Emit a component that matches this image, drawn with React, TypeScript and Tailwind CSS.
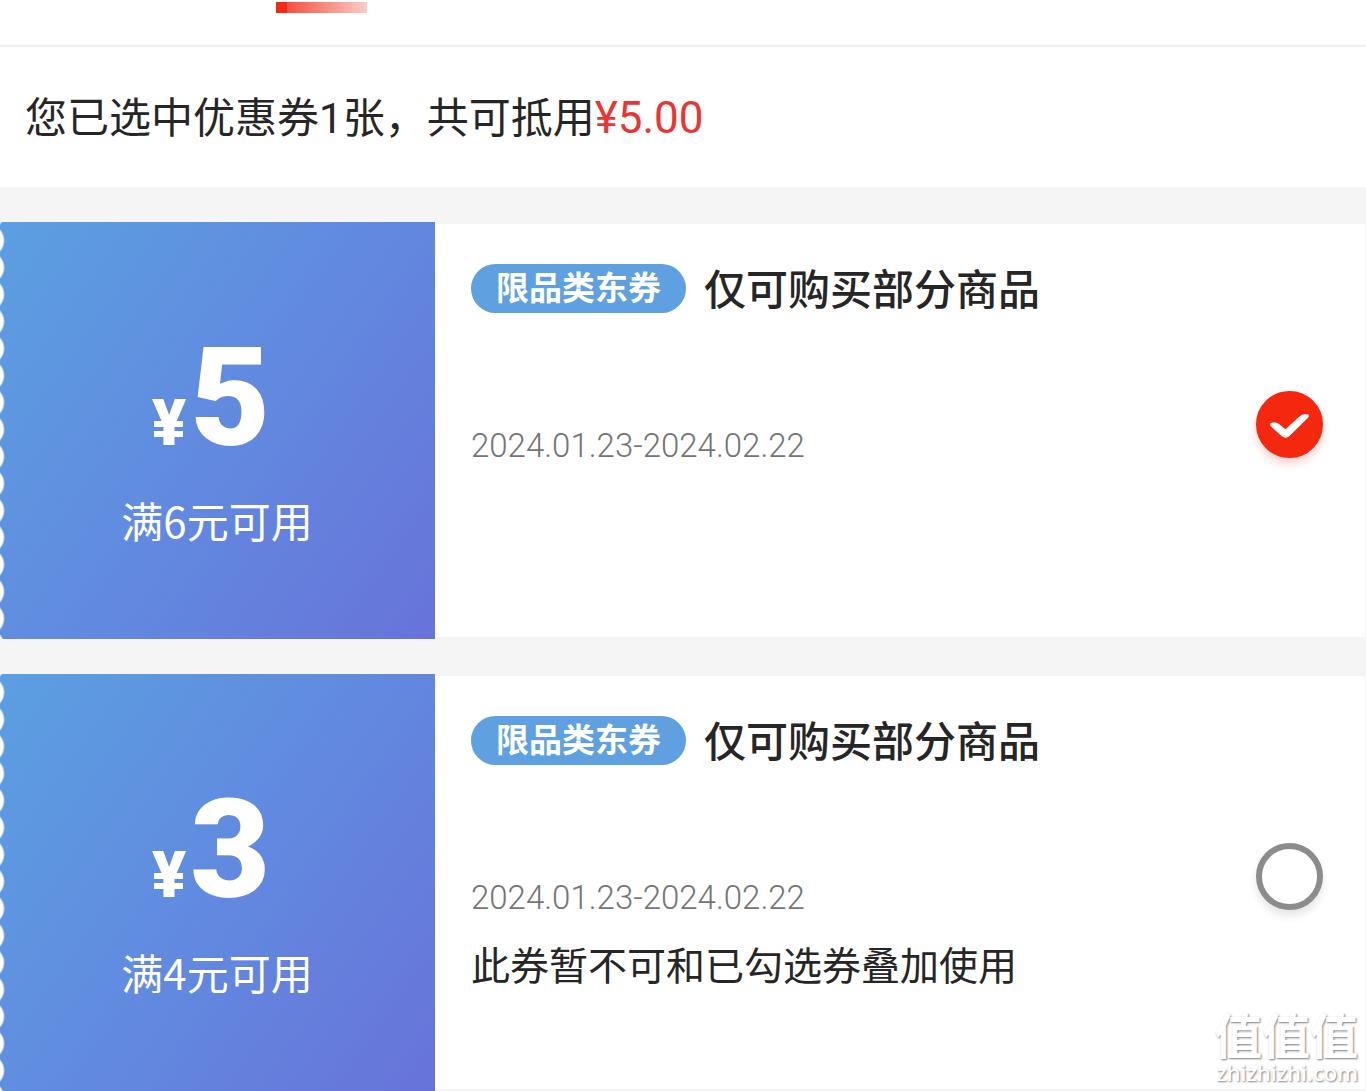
import { useState } from "react";

type Coupon = {
  id: string;
  amount: number;
  condition: string;
  tag: string;
  title: string;
  period: string;
  note?: string;
};

const coupons: Coupon[] = [
  {
    id: "coupon-5",
    amount: 5,
    condition: "满6元可用",
    tag: "限品类东券",
    title: "仅可购买部分商品",
    period: "2024.01.23-2024.02.22",
  },
  {
    id: "coupon-3",
    amount: 3,
    condition: "满4元可用",
    tag: "限品类东券",
    title: "仅可购买部分商品",
    period: "2024.01.23-2024.02.22",
    note: "此券暂不可和已勾选券叠加使用",
  },
];

function CouponCheckbox({
  id,
  checked,
  onChange,
}: {
  id: string;
  checked: boolean;
  onChange: () => void;
}) {
  return (
    <span className="grid shrink-0 place-items-center">
      <input
        type="checkbox"
        checked={checked}
        onChange={onChange}
        aria-labelledby={id}
        className="col-start-1 row-start-1 size-[67px] cursor-pointer appearance-none rounded-full border-[6px] border-[#8c8c8c] bg-white shadow-[0_6px_8px_rgba(0,0,0,0.1)] checked:border-[#f4270f] checked:bg-[#f4270f] checked:shadow-[0_6px_8px_rgba(244,39,15,0.2)]"
      />
      {checked && (
        <svg
          viewBox="0 0 67 67"
          className="pointer-events-none col-start-1 row-start-1 size-[67px]"
          aria-hidden="true"
        >
          <path
            d="M14.500 35Q13.200 31.500 17 31.500H19.500Q21.500 31.500 23 33L29.500 38.300L43.500 25.500Q46 23.300 49 23.300H51.500Q54.200 24 52 26.800L33.500 45Q29.500 48.500 25.500 45Z"
            fill="white"
          />
        </svg>
      )}
    </span>
  );
}

function CouponCard({
  coupon,
  checked,
  onToggle,
}: {
  coupon: Coupon;
  checked: boolean;
  onToggle: () => void;
}) {
  return (
    <li className="flex min-h-[417px] items-stretch">
      <div className="flex w-[435px] shrink-0 bg-[linear-gradient(125deg,#5b9fe1_0%,#6288df_55%,#6873d9_100%)]">
        <div className="w-[5px] bg-[radial-gradient(circle_at_-12px_50%,white_15px,transparent_17px)] bg-[length:5px_27px] bg-[position:0_5px]" />
        <div className="flex flex-1 flex-col items-center pt-[106px] pr-1.5 text-white">
          <p className="flex items-baseline gap-1 pr-3 font-[Roboto,sans-serif] leading-[140px] font-black">
            <span className="text-[64px] leading-[62px]">¥</span>
            <span className="text-[138px]">{coupon.amount}</span>
          </p>
          <p className="mt-[22px] text-[42px] leading-[60px]">{coupon.condition}</p>
        </div>
      </div>
      <div className="my-0.5 mr-px flex flex-1 items-center bg-white pr-[42px] pl-9">
        <div className="flex-1 self-stretch pt-[34px]">
          <div className="flex items-center gap-[18px]">
            <span className="flex h-[49px] items-center rounded-full bg-[#5fa0e0] px-[25px] pb-1 text-[33px] leading-[45px] font-bold text-white">
              {coupon.tag}
            </span>
            <h2 id={coupon.id} className="pb-0.5 text-[42px] leading-[58px] font-medium">
              {coupon.title}
            </h2>
          </div>
          <p className="mt-[103px] font-[Roboto,sans-serif] text-[33px] leading-[50px] font-light text-[#757575]">
            {coupon.period}
          </p>
          {coupon.note && <p className="mt-3 text-[39px] leading-[56px]">{coupon.note}</p>}
        </div>
        <div className="-mt-3">
          <CouponCheckbox id={coupon.id} checked={checked} onChange={onToggle} />
        </div>
      </div>
    </li>
  );
}

export default function App() {
  const [selected, setSelected] = useState<string[]>(["coupon-5"]);
  const toggle = (id: string) =>
    setSelected((ids) => (ids.includes(id) ? ids.filter((i) => i !== id) : [...ids, id]));
  const total = coupons
    .filter((c) => selected.includes(c.id))
    .reduce((sum, c) => sum + c.amount, 0);

  return (
    <main className="relative bg-[#f5f5f5] font-['Noto_Sans_CJK_SC',sans-serif] text-[#262626]">
      <div className="flex h-[47px] border-b-2 border-[#f0f0f0] bg-white pt-0.5 pl-[276px]">
        <div className="h-[11px] w-[91px] bg-[linear-gradient(90deg,#f02a14_0,#f02a14_11px,#f2513f_11px,#f9cdca_100%)]" />
      </div>
      <header className="flex h-[140px] items-center bg-white px-[25px]">
        <p className="text-[42px] leading-[60px]">
          您已选中优惠券
          <span className="font-[Roboto,sans-serif]">{selected.length}</span>
          张，共可抵用
          <span className="font-[Roboto,sans-serif] text-[44px] text-[#e93635]">
            ¥{total.toFixed(2)}
          </span>
        </p>
      </header>
      <ul className="flex flex-col gap-[35px] pt-[35px]">
        {coupons.map((c) => (
          <CouponCard
            key={c.id}
            coupon={c}
            checked={selected.includes(c.id)}
            onToggle={() => toggle(c.id)}
          />
        ))}
      </ul>
      <div className="pointer-events-none absolute right-2 bottom-1.5 flex flex-col items-end text-white [text-shadow:1px_1px_2px_rgba(0,0,0,0.5)]">
        <span className="text-[48px] leading-[52px] font-bold">值值值</span>
        <span className="font-['Noto_Sans',sans-serif] text-[22px] leading-[26px] font-medium">
          zhizhizhi.com
        </span>
      </div>
    </main>
  );
}
